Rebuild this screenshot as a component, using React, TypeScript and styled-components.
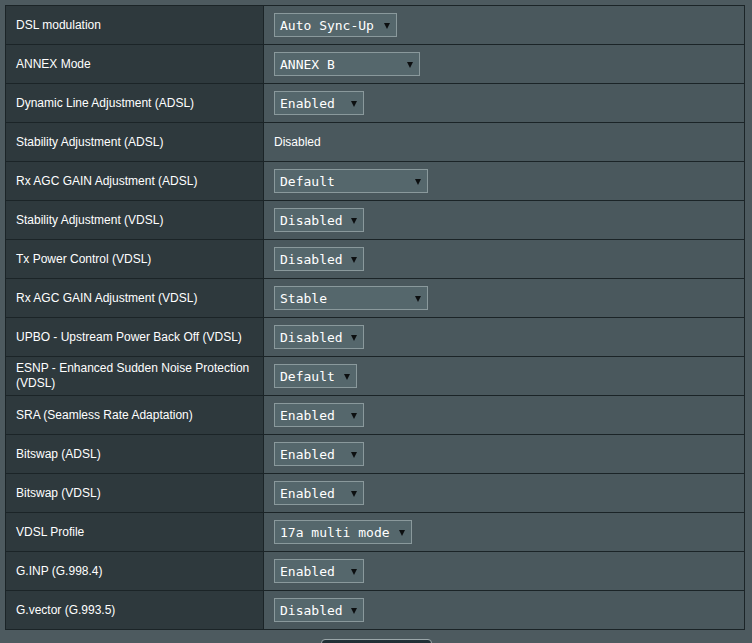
import React from "react";
import styled, {createGlobalStyle} from "styled-components";

const GlobalStyle = createGlobalStyle`
  html, body {
    margin: 0;
    padding: 0;
    background-color: #4d5a5f;
    overflow: hidden;
  }
`;

interface Option {
    label: string;
    value?: string;
    width?: number;
}

const rows: Option[] = [
    {label: "DSL modulation", value: "Auto Sync-Up", width: 123},
    {label: "ANNEX Mode", value: "ANNEX B", width: 146},
    {label: "Dynamic Line Adjustment (ADSL)", value: "Enabled", width: 90},
    {label: "Stability Adjustment (ADSL)"},
    {label: "Rx AGC GAIN Adjustment (ADSL)", value: "Default", width: 154},
    {label: "Stability Adjustment (VDSL)", value: "Disabled", width: 90},
    {label: "Tx Power Control (VDSL)", value: "Disabled", width: 90},
    {label: "Rx AGC GAIN Adjustment (VDSL)", value: "Stable", width: 154},
    {label: "UPBO - Upstream Power Back Off (VDSL)", value: "Disabled", width: 90},
    {label: "ESNP - Enhanced Sudden Noise Protection (VDSL)", value: "Default", width: 83},
    {label: "SRA (Seamless Rate Adaptation)", value: "Enabled", width: 90},
    {label: "Bitswap (ADSL)", value: "Enabled", width: 90},
    {label: "Bitswap (VDSL)", value: "Enabled", width: 90},
    {label: "VDSL Profile", value: "17a multi mode", width: 138},
    {label: "G.INP (G.998.4)", value: "Enabled", width: 90},
    {label: "G.vector (G.993.5)", value: "Disabled", width: 90},
];

const S = {
    Page: styled.div`
      padding: 5px 7px 0 5px;
      font-family: Arial, "Liberation Sans", Helvetica, sans-serif;
    `,
    FormTable: styled.table`
      width: 740px;
      border-collapse: collapse;
      border: 1px solid #1b2427;
    `,
    Th: styled.th`
      width: 237px;
      height: 38px;
      padding: 0 10px 0 10px;
      background-color: #2e393d;
      border: 1px solid #1b2427;
      color: #ffffff;
      font-size: 12px;
      font-weight: normal;
      line-height: 15px;
      text-align: left;
      vertical-align: middle;
    `,
    Td: styled.td`
      height: 38px;
      padding: 0 0 0 10px;
      background-color: #4a585d;
      border: 1px solid #1b2427;
      color: #ffffff;
      font-size: 12px;
      vertical-align: middle;
    `,
    Select: styled.div<{ $width: number }>`
      box-sizing: border-box;
      width: ${p => p.$width}px;
      height: 24px;
      display: flex;
      align-items: center;
      justify-content: space-between;
      padding: 0 6px 0 5px;
      background-color: #55676c;
      border: 1px solid #8a999c;
      color: #ffffff;
      font-family: "DejaVu Sans Mono", "Liberation Mono", monospace;
      font-size: 13px;
      white-space: pre;
    `,
    Arrow: styled.span`
      width: 0;
      height: 0;
      border-left: 3px solid transparent;
      border-right: 3px solid transparent;
      border-top: 6px solid #0c0f10;
      margin-top: 1px;
    `,
    Footer: styled.div`
      display: flex;
      justify-content: center;
      padding-top: 9px;
    `,
    ApplyButton: styled.button`
      width: 111px;
      height: 30px;
      margin-left: 2px;
      background: linear-gradient(#233037, #141c20);
      border: 1px solid #9aa6a9;
      border-radius: 4px;
    `,
};

const App: React.FC = () => {
    return (
        <S.Page>
            <GlobalStyle/>
            <S.FormTable>
                <tbody>
                {rows.map(row => (
                    <tr key={row.label}>
                        <S.Th>{row.label}</S.Th>
                        <S.Td>
                            {row.value ? (
                                <S.Select $width={row.width ?? 90}>
                                    <span>{row.value}</span>
                                    <S.Arrow/>
                                </S.Select>
                            ) : (
                                "Disabled"
                            )}
                        </S.Td>
                    </tr>
                ))}
                </tbody>
            </S.FormTable>
            <S.Footer>
                <S.ApplyButton aria-label="Apply"/>
            </S.Footer>
        </S.Page>
    );
};

export default App;
